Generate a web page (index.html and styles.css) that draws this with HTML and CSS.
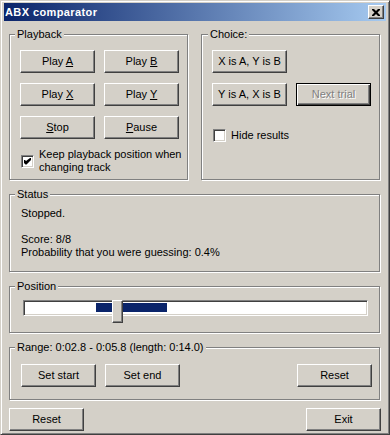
FILE: index.html
```html
<!DOCTYPE html>
<html lang="en">
<head>
	<meta charset="UTF-8" />
	<title>ABX comparator</title>
	<link rel="stylesheet" href="styles.css">
</head>
<body>
	<!-- Window -->
	<div class="window">
		<!-- Title bar -->
		<div class="titlebar">
			<span class="title">ABX comparator</span>
			<button class="close" type="button">
				<svg width="8" height="7" viewBox="0 0 8 7"><path d="M0 0h2l2 2 2-2h2v1l-2.5 2.5 2.5 2.5v1h-2l-2-2-2 2h-2v-1l2.5-2.5-2.5-2.5z" fill="#000"/></svg>
			</button>
		</div>
		<!-- End of Title bar -->

		<div class="client">
			<div class="top-row">
				<!-- Playback -->
				<fieldset class="group playback">
					<legend>Playback</legend>
					<div class="button-grid">
						<button class="btn" type="button">Play <u>A</u></button>
						<button class="btn" type="button">Play <u>B</u></button>
						<button class="btn" type="button">Play <u>X</u></button>
						<button class="btn" type="button">Play <u>Y</u></button>
						<button class="btn" type="button"><u>S</u>top</button>
						<button class="btn" type="button"><u>P</u>ause</button>
					</div>
					<label class="check keep">
						<span class="box">
							<svg width="7" height="7" viewBox="0 0 7 7"><path d="M0 2h1l1 1 4-3h1v2l-4.5 4.5h-1l-2.5-2.5z" fill="#000"/></svg>
						</span>
						<span class="nowrap">Keep playback position when<br>changing track</span>
					</label>
				</fieldset>

				<!-- Choice -->
				<fieldset class="group choice">
					<legend>Choice:</legend>
					<div class="button-grid">
						<button class="btn" type="button">X is A, Y is B</button>
						<span></span>
						<button class="btn" type="button">Y is A, X is B</button>
						<button class="btn default" type="button" disabled>Next trial</button>
					</div>
					<label class="check hide">
						<span class="box"></span>
						<span>Hide results</span>
					</label>
				</fieldset>
			</div>

			<!-- Status -->
			<fieldset class="group status">
				<legend>Status</legend>
				<p>Stopped.</p>
				<p>&nbsp;</p>
				<p>Score: 8/8</p>
				<p>Probability that you were guessing: 0.4%</p>
			</fieldset>

			<!-- Position -->
			<fieldset class="group position">
				<legend>Position</legend>
				<div class="slider">
					<div class="track">
						<div class="selection" style="left: 72px; width: 71px;"></div>
					</div>
					<div class="thumb" style="left: 89px;"></div>
				</div>
			</fieldset>

			<!-- Range -->
			<fieldset class="group range">
				<legend>Range: 0:02.8 - 0:05.8 (length: 0:14.0)</legend>
				<div class="range-buttons">
					<button class="btn" type="button">Set start</button>
					<button class="btn" type="button">Set end</button>
					<button class="btn push-right" type="button">Reset</button>
				</div>
			</fieldset>

			<div class="footer">
				<button class="btn" type="button">Reset</button>
				<button class="btn exit" type="button">Exit</button>
			</div>
		</div>
	</div>
	<!-- End of Window -->
</body>
</html>
```

FILE: styles.css
```css
/* Variables */
:root {
	--face: #d4d0c8;
	--light: #fff;
	--shadow: #808080;
	--dark: #404040;
	--caption: #0a246a;
	--caption-end: #a6caf0;
}

* {
	box-sizing: border-box;
}

body {
	margin: 0;
	background: var(--face);
	color: #000;
	font-family: "Liberation Sans", Arial, sans-serif;
	font-size: 11px;
	line-height: 13px;
}

p {
	margin: 0;
}

/* Window frame */
.window {
	width: 390px;
	height: 435px;
	display: flex;
	flex-direction: column;
	background: var(--face);
	border: 1px solid;
	border-color: var(--face) var(--dark) var(--dark) var(--face);
	box-shadow: inset 1px 1px var(--light), inset -1px -1px var(--shadow);
	padding: 2px 3px 3px 3px;
}

.titlebar {
	flex: none;
	height: 18px;
	display: flex;
	align-items: center;
	justify-content: space-between;
	padding: 0 2px 0 1px;
	background: linear-gradient(to right, var(--caption), var(--caption-end));
}

.title {
	color: #fff;
	font-weight: bold;
	letter-spacing: 0.4px;
}

.close {
	width: 16px;
	height: 14px;
	padding: 0;
	display: flex;
	align-items: center;
	justify-content: center;
	background: var(--face);
	border: 1px solid;
	border-color: var(--light) var(--dark) var(--dark) var(--light);
	box-shadow: inset -1px -1px var(--shadow);
}

.client {
	flex: 1;
	display: flex;
	flex-direction: column;
	gap: 8px;
	padding: 7px 6px 4px 5px;
}

/* Group boxes */
.top-row {
	display: grid;
	grid-template-columns: 179px 179px;
	column-gap: 13px;
}

.group {
	--pad: 10px;
	margin: 0;
	min-width: 0;
	padding: 0 0 0 var(--pad);
	border: 1px solid var(--shadow);
	box-shadow: 1px 1px var(--light), inset 1px 1px var(--light);
}

.group legend {
	margin-left: calc(5px - var(--pad));
	padding: 0 2px;
	background: var(--face);
}

.playback {
	padding-top: 9px;
	padding-bottom: 5px;
}

.choice {
	padding-top: 9px;
}

.choice legend {
	margin-left: calc(6px - var(--pad));
}

.status {
	--pad: 11px;
	padding-top: 6px;
	padding-bottom: 12px;
}

.position {
	--pad: 13px;
	padding-top: 3px;
	padding-bottom: 9px;
}

.range {
	--pad: 11px;
	padding-top: 10px;
	padding-right: 7px;
	padding-bottom: 12px;
}

/* Buttons */
.btn {
	width: 75px;
	height: 23px;
	padding: 0;
	font: inherit;
	color: #000;
	background: var(--face);
	border: 1px solid;
	border-color: var(--light) var(--dark) var(--dark) var(--light);
	box-shadow: inset -1px -1px var(--shadow);
}

.btn u {
	text-underline-offset: 1px;
}

.btn.default {
	border-color: #000;
	box-shadow: inset 1px 1px var(--light), inset -1px -1px var(--dark), inset -2px -2px var(--shadow);
}

.btn:disabled {
	color: var(--shadow);
	text-shadow: 1px 1px 0 var(--light);
}

.button-grid {
	display: grid;
	grid-template-columns: 75px 75px;
	gap: 10px 9px;
}

/* Checkboxes */
.check {
	display: flex;
	align-items: center;
	gap: 5px;
	margin-left: 1px;
}

.nowrap {
	white-space: nowrap;
}

.keep {
	margin-top: 9px;
}

.hide {
	margin-top: 23px;
}

.box {
	width: 13px;
	height: 13px;
	flex: none;
	display: flex;
	align-items: center;
	justify-content: center;
	background: #fff;
	border: 1px solid;
	border-color: var(--shadow) var(--light) var(--light) var(--shadow);
	box-shadow: inset 1px 1px var(--dark), inset -1px -1px var(--face);
}

/* Slider */
.slider {
	position: relative;
	width: 345px;
	height: 23px;
}

.track {
	position: relative;
	margin-top: 4px;
	height: 16px;
	background: #fff;
	border: 1px solid;
	border-color: var(--shadow) var(--light) var(--light) var(--shadow);
	box-shadow: inset 1px 1px var(--dark), inset -1px -1px var(--face);
}

.selection {
	position: absolute;
	top: 2px;
	height: 9px;
	background: var(--caption);
}

.thumb {
	position: absolute;
	top: 0;
	width: 11px;
	height: 23px;
	background: var(--face);
	border: 1px solid;
	border-color: var(--light) var(--dark) var(--dark) var(--light);
	box-shadow: inset -1px -1px var(--shadow);
}

/* Range + footer */
.range-buttons {
	display: flex;
	gap: 9px;
}

.push-right {
	margin-left: auto;
}

.footer {
	display: flex;
	justify-content: space-between;
	margin-right: -1px;
}
```
